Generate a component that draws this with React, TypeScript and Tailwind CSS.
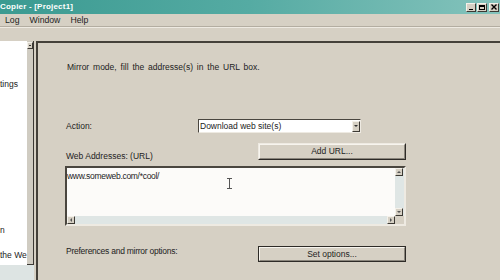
import React from 'react';

const font = { fontFamily: '"Liberation Sans", Arial, sans-serif' };

function CtrlButton({ children }: { children: React.ReactNode }) {
  return (
    <div className="w-[10px] h-[9px] bg-[#d6d0c4] border border-t-[#f4f1ea] border-l-[#f4f1ea] border-r-[#3c3934] border-b-[#3c3934] flex items-center justify-center text-black">
      {children}
    </div>
  );
}

function TitleBar() {
  return (
    <div className="h-[14px] flex items-center justify-between bg-gradient-to-r from-[#3a9a91] via-[#55aba3] to-[#84c3bc] pr-[1px]">
      <span className="text-white text-[8px] font-bold leading-none tracking-[0.2px]">
        Copier - [Project1]
      </span>
      <div className="flex items-center gap-[1px]">
        <CtrlButton>
          <div className="w-[4px] h-[1px] bg-black mt-[4px]" />
        </CtrlButton>
        <CtrlButton>
          <div className="w-[6px] h-[5px] border border-black border-t-2" />
        </CtrlButton>
        <div className="ml-[1px]">
          <CtrlButton>
            <svg width="6" height="6" viewBox="0 0 6 6">
              <path d="M0.5 0.5 L5.5 5.5 M5.5 0.5 L0.5 5.5" stroke="black" strokeWidth="1.4" />
            </svg>
          </CtrlButton>
        </div>
      </div>
    </div>
  );
}

function MenuBar() {
  return (
    <div className="h-[12px] flex items-center text-[8.7px] text-[#1e1e1e] leading-none pl-[5px] gap-[10px]">
      <span>Log</span>
      <span>Window</span>
      <span>Help</span>
    </div>
  );
}

function ArrowBox({ dir }: { dir: 'up' | 'down' | 'left' | 'right' }) {
  const d = {
    up: 'M1 4 L3 2 L5 4 Z',
    down: 'M1 2 L3 4 L5 2 Z',
    left: 'M4 1 L2 3 L4 5 Z',
    right: 'M2 1 L4 3 L2 5 Z',
  }[dir];
  return (
    <div className="w-[8px] h-[8px] shrink-0 bg-[#d6d0c4] border border-t-[#f4f1ea] border-l-[#f4f1ea] border-r-[#3c3934] border-b-[#3c3934] flex items-center justify-center">
      <svg width="6" height="6" viewBox="0 0 6 6">
        <path d={d} fill="#555" />
      </svg>
    </div>
  );
}

function LeftPanel() {
  return (
    <div className="w-[36px] flex flex-col shrink-0">
      <div className="h-[224px] flex">
        <div className="w-[27px] bg-white overflow-hidden text-[8.5px] text-[#222] leading-[10px] whitespace-nowrap">
          <div className="mt-[38px]">tings</div>
          <div className="mt-[136px]">n</div>
          <div className="mt-[15px]">the We</div>
        </div>
        <div className="w-[7px] bg-[#d0ccc2] border-r border-b border-[#3c3934] flex flex-col pt-[1px]">
          <div className="w-[6px] h-[7px] bg-[#d6d0c4] border border-t-[#f4f1ea] border-l-[#f4f1ea] border-r-[#3c3934] border-b-[#3c3934] flex items-center justify-center">
            <div className="w-[2px] h-[1px] bg-[#333]" />
          </div>
        </div>
      </div>
      <div className="flex-1 flex">
        <div className="w-[34px] bg-[#dde4e3]" />
      </div>
    </div>
  );
}

function Win98Button({ label, isDefault }: { label: string; isDefault?: boolean }) {
  return (
    <div
      className={
        isDefault
          ? 'w-[148px] h-[16px] border border-[#2e2b27] bg-[#d6d0c4] flex'
          : 'w-[148px] h-[17px] border border-t-[#eeeae2] border-l-[#eeeae2] border-r-[#2e2b27] border-b-[#2e2b27] bg-[#d6d0c4] flex'
      }
    >
      <div className="flex-1 border border-t-[#f7f4ee] border-l-[#f7f4ee] border-r-[#8a857c] border-b-[#8a857c] flex items-center justify-center text-[8.5px] text-[#1e1e1e] leading-none">
        {label}
      </div>
    </div>
  );
}

function UrlBox() {
  return (
    <div className="w-[341px] h-[60px] border-2 border-t-[#4a463f] border-l-[#4a463f] border-r-[#eeeae2] border-b-[#eeeae2] flex flex-col relative">
      <div className="flex flex-1">
        <div className="flex-1 bg-[#fcfbf9] text-[8.5px] text-[#222] leading-[10px] pt-[3px] tracking-[-0.3px]">
          www.someweb.com/*cool/
        </div>
        <div className="w-[9px] bg-[#dfe6e5] flex flex-col justify-between">
          <ArrowBox dir="up" />
          <ArrowBox dir="down" />
        </div>
      </div>
      <div className="h-[8px] flex">
        <div className="flex-1 bg-[#dfe6e5] flex justify-between">
          <ArrowBox dir="left" />
          <ArrowBox dir="right" />
        </div>
        <div className="w-[9px] bg-[#d6d0c4]" />
      </div>
      <svg className="absolute left-[160px] top-[10px]" width="5" height="11" viewBox="0 0 5 11">
        <path d="M0 0.5 H5 M2.5 0.5 V10.5 M0 10.5 H5" stroke="#555" strokeWidth="1" />
      </svg>
    </div>
  );
}

function RightPanel() {
  return (
    <div className="flex-1 border-l-2 border-t-2 border-[#45413a] pl-[27px] pt-[19px] text-[8.5px] text-[#222] leading-[10px]">
      <div className="pl-[2px] [word-spacing:1.5px]">Mirror mode, fill the addresse(s) in the URL box.</div>

      <div className="mt-[47px] flex items-center h-[14px]">
        <div className="w-[133px] pl-[1px]">Action:</div>
        <div className="w-[163px] h-[14px] border border-t-[#4a463f] border-l-[#4a463f] border-r-[#eeeae2] border-b-[#eeeae2] bg-white flex items-center">
          <div className="flex-1 pl-[1px]">Download web site(s)</div>
          <div className="w-[8px] h-[11px] bg-[#d6d0c4] border border-t-[#f4f1ea] border-l-[#f4f1ea] border-r-[#3c3934] border-b-[#3c3934] flex items-center justify-center">
            <svg width="6" height="6" viewBox="0 0 6 6">
              <path d="M1 2 L3 4 L5 2 Z" fill="#333" />
            </svg>
          </div>
        </div>
      </div>

      <div className="mt-[10px] flex items-end h-[18px]">
        <div className="w-[193px] pl-[1px]">Web Addresses: (URL)</div>
        <div className="mb-[1px]">
          <Win98Button label="Add URL..." />
        </div>
      </div>

      <div className="mt-[5px]">
        <UrlBox />
      </div>

      <div className="mt-[20px] flex items-start">
        <div className="w-[193px] pl-[1px] tracking-[-0.25px]">Preferences and mirror options:</div>
        <Win98Button label="Set options..." isDefault />
      </div>
    </div>
  );
}

export default function App() {
  return (
    <div className="w-[500px] h-[280px] overflow-hidden bg-[#d6d0c4] flex flex-col" style={font}>
      <TitleBar />
      <MenuBar />
      <div className="h-[1px] bg-[#b3ada1]" />
      <div className="h-[1px] bg-[#eeeae2]" />
      <div className="h-[13px]" />
      <div className="flex flex-1 min-h-0">
        <LeftPanel />
        <RightPanel />
      </div>
    </div>
  );
}
